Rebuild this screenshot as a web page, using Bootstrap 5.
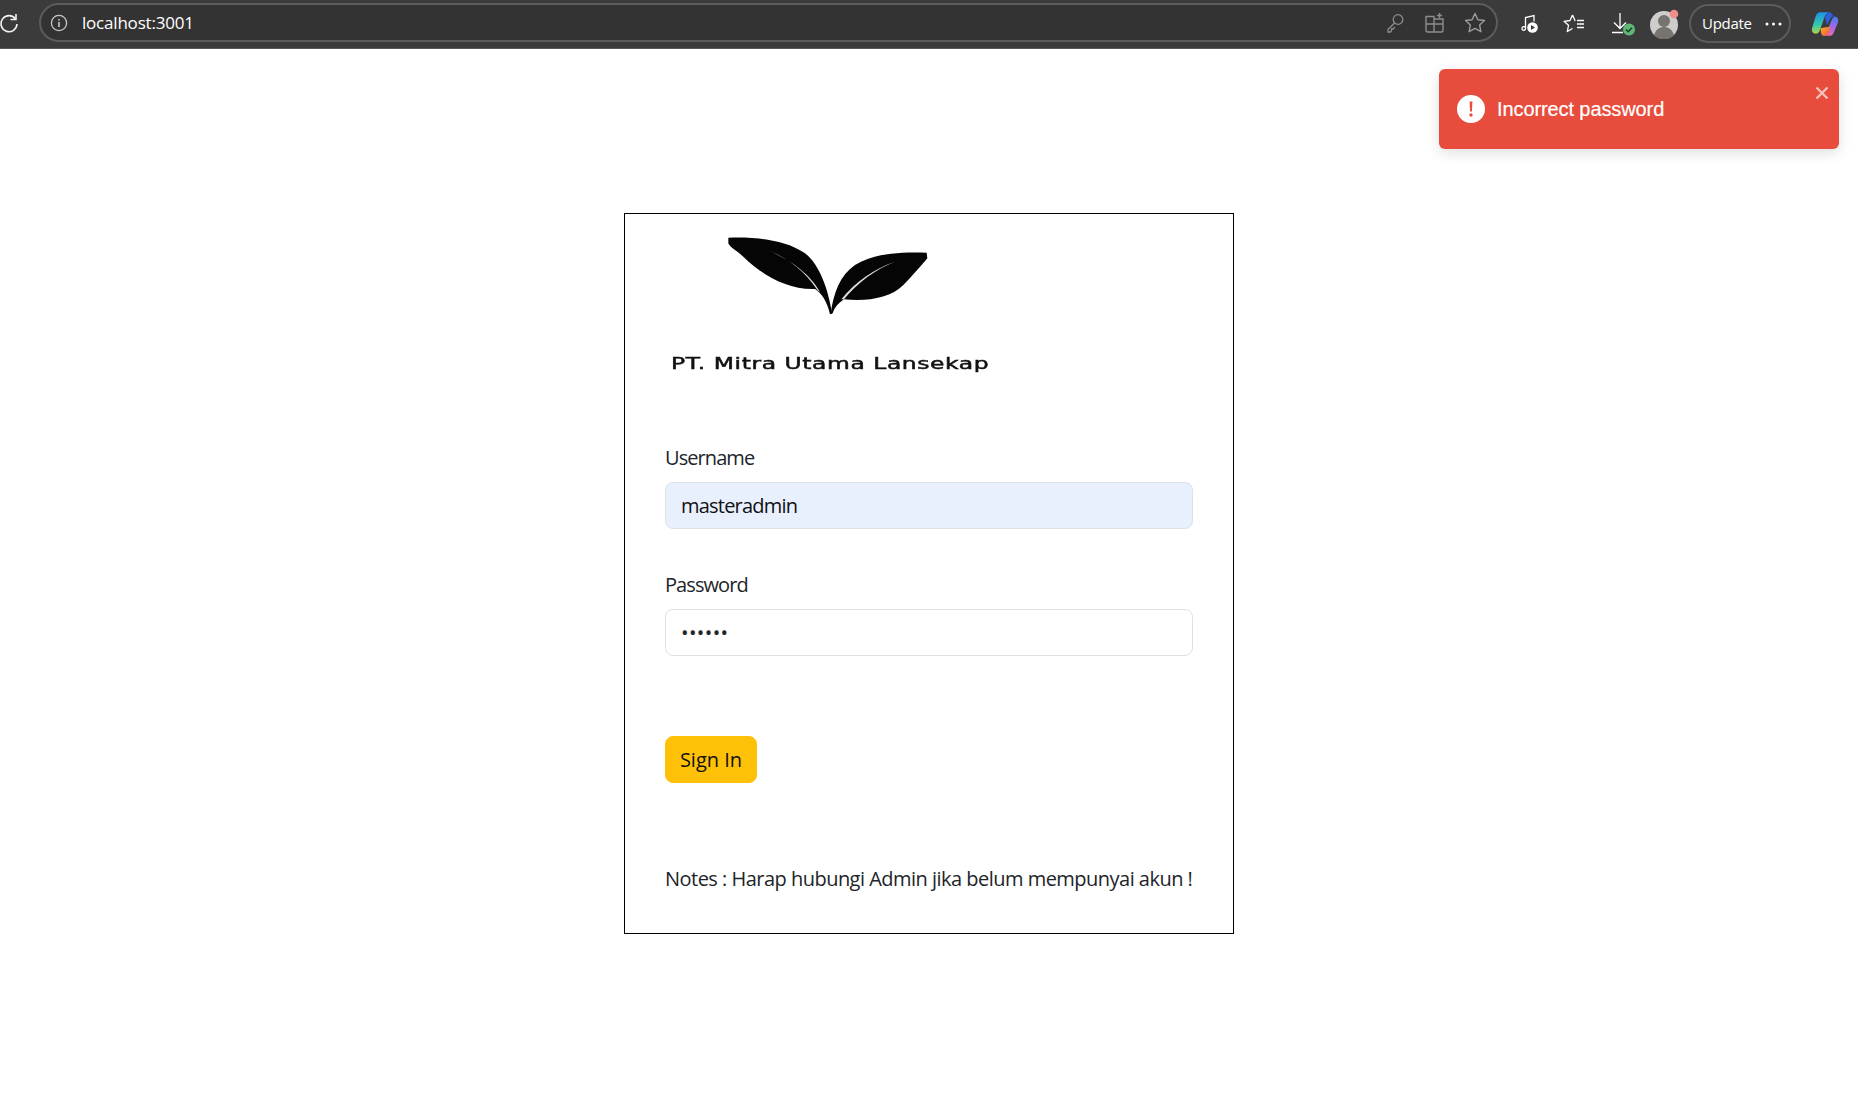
<!DOCTYPE html>
<html lang="en">
<head>
  <meta charset="UTF-8" />
  <meta name="viewport" content="width=device-width, initial-scale=1" />
  <title>Login</title>
  <link href="https://cdn.jsdelivr.net/npm/bootstrap@5.3.3/dist/css/bootstrap.min.css" rel="stylesheet" />
  <style>
    body { font-family: "Open Sans", "Noto Sans", sans-serif; background: #fff; }
    .browser-bar { height: 49px; background: #3b3b3b; border-bottom: 1px solid #5a5a5a; color: #fff; padding-top: 3px; }
    .reload-wrap { width: 39px; height: 39px; }
    .reload-wrap svg { margin-left: -1px; }
    .url-pill { height: 39px; background: #333; border: 2px solid #5c5c5c; border-radius: 20px; padding-left: 9px; padding-right: 1px; width: 1459px; }
    .url-text { font-size: 17px; letter-spacing: -.2px; margin-left: 14px; color: #fff; }
    .tool-slot { width: 40px; height: 30px; }
    .tool-row { margin-left: 12px; }
    .download-slot { margin-left: 6px; }
    .avatar-slot { margin-left: 5px; }
    .update-pill { width: 102px; height: 39px; border: 2px solid #5c5c5c; border-radius: 20px; font-size: 15px; letter-spacing: -.3px; padding-left: 11px; margin-left: 10px; }
    .update-dots { margin-left: 13px; }
    .copilot-slot { margin-left: 20px; }

    .error-toast { position: absolute; top: 69px; right: 19px; width: 400px; height: 80px; background: #e74c3c; color: #fff; border-radius: 6px; box-shadow: 0 4px 14px rgba(0,0,0,.13); padding: 0 18px; font-family: "Liberation Sans", Arial, sans-serif; font-size: 20px; letter-spacing: -.1px; -webkit-text-stroke: .2px #fff; }
    .toast-x { position: absolute; top: 17px; right: 10px; width: 14px; height: 14px; }

    .login-box { width: 610px; height: 721px; margin: 164px auto 0; border: 1px solid #000; padding: 0 40px; }
    .logo-area { height: 229px; padding-top: 21px; }
    .logo-leaves { display: block; margin-left: 60px; filter: blur(.5px); }
    .logo-name { font-family: "DejaVu Sans", sans-serif; font-weight: 400; font-size: 16.5px; -webkit-text-stroke: .5px #111; letter-spacing: .4px; margin: 34px 0 0 6px; color: #111; line-height: 20px; white-space: nowrap; filter: blur(.5px); transform: scaleX(1.42); transform-origin: left center; }
    .field-label { font-size: 20px; line-height: 30px; margin-bottom: 9px; letter-spacing: -.92px; color: #212529; display: block; }
    .login-box .form-control-lg { height: 47px; min-height: 47px; font-family: inherit; padding-left: 15px; letter-spacing: -.78px; border-radius: 8px; color: #111; }
    .login-box .pass-input { letter-spacing: .4px; padding-left: 15px; color: #212529; }
    .auto-filled { background: #e8f0fe !important; }
    .gap-field { margin-top: 41px; }
    .sign-btn { margin-top: 80px; width: 92px; height: 47px; padding: 0; background: #ffc107; letter-spacing: 0; color: #111; }
    .note-line { margin: 81px 0 0; font-size: 20px; line-height: 30px; letter-spacing: -.52px; color: #212529; white-space: nowrap; }
  </style>
</head>
<body>

  <div class="browser-bar d-flex align-items-start">
    <div class="reload-wrap d-flex align-items-center flex-shrink-0">
      <svg width="20" height="20" viewBox="0 0 20 20" fill="none" stroke="#f2f2f2" stroke-width="1.6"><path d="M16.5 6A8 8 0 1 0 18 11"/><path d="M17 1v5.5h-5.5"/></svg>
    </div>
    <div class="url-pill d-flex align-items-center flex-shrink-0">
      <svg width="18" height="18" viewBox="0 0 18 18" fill="none" stroke="#c8c8c8" stroke-width="1.3"><circle cx="9" cy="9" r="7.6"/><path d="M9 8v5M9 5v1.6" stroke-width="1.6"/></svg>
      <span class="url-text">localhost:3001</span>
      <div class="ms-auto d-flex align-items-center">
        <div class="tool-slot d-flex align-items-center justify-content-center">
          <svg width="18" height="20" viewBox="0 0 18 20" fill="none" stroke="#8d8d8d" stroke-width="1.3"><circle cx="12" cy="6.5" r="4.8"/><path d="M8.5 10 2 16.5V19h2.5l1-1.2V16h1.7l1.6-2"/></svg>
        </div>
        <div class="tool-slot d-flex align-items-center justify-content-center">
          <svg width="20" height="20" viewBox="0 0 20 20" fill="none" stroke="#8d8d8d" stroke-width="1.4"><path d="M1 3.5h8V19H2.5A1.5 1.5 0 0 1 1 17.500ZM1 11h17v6.500a1.500 1.500 0 0 1-1.500 1.500H9M9 11V6h9v5M14.500 0v5M12 2.500h5"/></svg>
        </div>
        <div class="tool-slot d-flex align-items-center justify-content-center">
          <svg width="22" height="22" viewBox="0 0 22 22" fill="none" stroke="#9b9b9b" stroke-width="1.4" stroke-linejoin="round"><path d="m11 1.500 2.900 6.200 6.600.8-4.900 4.500 1.300 6.700L11 16.400l-5.900 3.300 1.300-6.700L1.500 8.500l6.600-.8Z"/></svg>
        </div>
      </div>
    </div>
    <div class="tool-row d-flex align-items-center h-100 flex-grow-1 pb-1">
      <div class="tool-slot d-flex align-items-center justify-content-center me-1">
        <svg width="18" height="20" viewBox="0 0 18 20" fill="none" stroke="#fff" stroke-width="1.300"><path d="M4.500 14V3.500L13 1.500v6"/><circle cx="2.800" cy="14.500" r="1.800"/><circle cx="11.500" cy="13.500" r="5.300" fill="#fff" stroke="none"/><path d="M10 11v5l4-2.500Z" fill="#3b3b3b" stroke="none"/></svg>
      </div>
      <div class="tool-slot d-flex align-items-center justify-content-center me-1">
        <svg width="22" height="22" viewBox="0 0 22 22" fill="none" stroke="#fff" stroke-width="1.300" stroke-linejoin="round"><path d="M9.500 2 12 7.500h-.5M9.500 2 7 7.500l-6 .8 4.500 4-1.200 6.200 5.200-3M14 7.500h7M14 11h7M14 14.500h7"/></svg>
      </div>
      <div class="tool-slot download-slot d-flex align-items-center justify-content-center">
        <svg width="24" height="24" viewBox="0 0 24 24" fill="none" stroke="#fff" stroke-width="1.300"><path d="M8 1v15M2 10.500 8 16.500l6-6M0 20.500h11"/><circle cx="17" cy="17.500" r="6" fill="#5fb878" stroke="none"/><path d="m14 17.500 2.200 2.200 3.800-4" stroke="#1d3b27" stroke-width="1.500"/></svg>
      </div>
      <div class="avatar-slot d-flex align-items-center justify-content-center">
        <svg width="30" height="30" viewBox="0 0 30 30"><circle cx="15" cy="16" r="14" fill="#cfccc9"/><circle cx="15" cy="12" r="6" fill="#77736f"/><path d="M5 26c2-6 6-8 10-8s8 2 10 8a14 14 0 0 1-20 0Z" fill="#77736f"/><circle cx="25" cy="5" r="4.300" fill="#f08d8d"/></svg>
      </div>
      <div class="update-pill d-flex align-items-center flex-shrink-0">
        <span>Update</span>
        <svg class="update-dots" width="17" height="4" viewBox="0 0 17 4" fill="#fff"><circle cx="2" cy="2" r="1.500"/><circle cx="8.500" cy="2" r="1.500"/><circle cx="15" cy="2" r="1.500"/></svg>
      </div>
      <svg class="copilot-slot flex-shrink-0" width="30" height="30" viewBox="0 0 28 28">
        <defs>
          <linearGradient id="cpA" x1="0" y1="0" x2="0" y2="1"><stop offset="0" stop-color="#1e90e8"/><stop offset=".6" stop-color="#35c9a5"/><stop offset="1" stop-color="#b6d24a"/></linearGradient>
          <linearGradient id="cpB" x1="0" y1="0" x2="0" y2="1"><stop offset="0" stop-color="#3f7cf0"/><stop offset=".55" stop-color="#a566e8"/><stop offset="1" stop-color="#f06ab0"/></linearGradient>
          <linearGradient id="cpC" x1="0" y1="0" x2="1" y2="1"><stop offset="0" stop-color="#ffb52e"/><stop offset="1" stop-color="#f0503c"/></linearGradient>
        </defs>
        <path d="M9 3c-3 0-4 2-5 5L1 18c-.7 3 1 5 3.500 5C7 23 8 21 9 18l3-9c1-3 3-6 6-6Z" fill="url(#cpA)"/>
        <path d="M10 25h7c3 0 4-2 5-5l3-7c1-3 0-6-3-6 0 0-2 1-3 4l-4 10c-1 3-3 4-5 4Z" fill="url(#cpB)"/>
        <path d="M13 8c1-3 3-5 5-5h-1c2 0 3 2 4 4-2 0-3 1-4 4l-2 4Z" fill="#2d5fe0"/>
        <path d="M9 18c0 3 .5 7 3 7 2 0 4-1 5-4l1-5c-2 1-6 1-9 2Z" fill="url(#cpC)"/>
      </svg>
    </div>
  </div>

  <div class="error-toast d-flex align-items-center" role="alert">
    <svg class="me-2 flex-shrink-0" width="28" height="28" viewBox="0 0 28 28"><circle cx="14" cy="14" r="14" fill="#fff"/><path d="M12.600 6.500h2.800l-.5 10h-1.800Z" fill="#e74c3c"/><circle cx="14" cy="20" r="1.700" fill="#e74c3c"/></svg>
    <span class="ms-1">Incorrect password</span>
    <svg class="toast-x" viewBox="0 0 14 14" stroke="#fff" stroke-opacity=".65" stroke-width="2.400"><path d="m1.500 1.500 11 11M12.500 1.500l-11 11"/></svg>
  </div>

  <div class="login-box">
    <div class="logo-area">
      <svg class="logo-leaves" width="210" height="85" viewBox="315 75 630 255">
        <path d="M325 83C410 80 500 90 555 130 600 165 625 240 636 310L630 313C622 275 605 250 585 237 500 240 420 190 370 140 350 122 330 112 325 100Z" fill="#050505"/>
        <path d="M425 115C490 135 550 175 592 240 L600 246 C570 190 500 140 425 115Z" fill="#ddd"/>
        <path d="M920 128C840 125 760 130 705 165 660 195 640 250 632 313L638 310C645 290 655 280 672 268 740 275 810 265 850 225 880 195 905 165 922 145Z" fill="#050505"/>
        <path d="M825 155C770 175 710 220 672 268 L664 268 C705 215 765 175 825 155Z" fill="#ddd"/>
      </svg>
      <div class="logo-name">PT. Mitra Utama Lansekap</div>
    </div>
    <form>
      <label class="field-label" for="username">Username</label>
      <input id="username" type="text" class="form-control form-control-lg auto-filled" value="masteradmin" />
      <label class="field-label gap-field" for="password">Password</label>
      <input id="password" type="password" class="form-control form-control-lg pass-input" value="secret" />
      <button type="button" class="btn btn-warning btn-lg sign-btn d-block">Sign In</button>
    </form>
    <p class="note-line">Notes : Harap hubungi Admin jika belum mempunyai akun !</p>
  </div>

</body>
</html>
